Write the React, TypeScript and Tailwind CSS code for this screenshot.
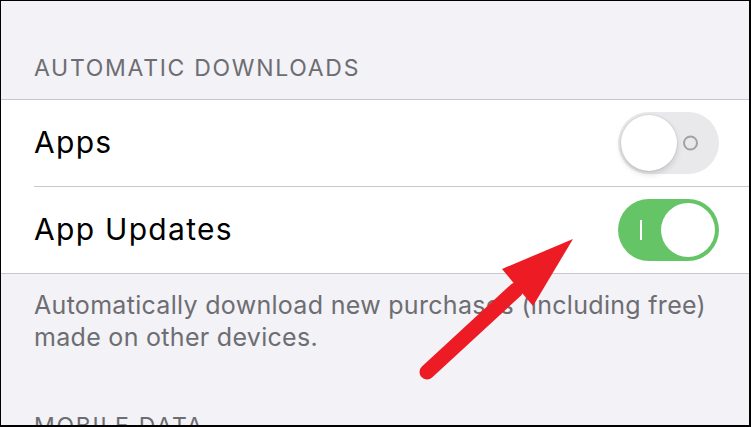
import React from "react";

const font = { fontFamily: "Inter, 'Noto Sans', sans-serif" };

function ToggleOff() {
  return (
    <div className="relative w-[101px] h-[62px] rounded-full bg-[#e9e9eb] flex items-center">
      <div className="absolute right-[21px] top-1/2 -translate-y-1/2 w-[15px] h-[15px] rounded-full border-2 border-[#a2a2a6]" />
      <div className="absolute left-[3px] top-[3px] w-[56px] h-[56px] rounded-full bg-white shadow-[0_3px_6px_rgba(0,0,0,0.15),0_0_0_1px_rgba(0,0,0,0.05)]" />
    </div>
  );
}

function ToggleOn() {
  return (
    <div className="relative w-[101px] h-[62px] rounded-full bg-[#65c466] flex items-center">
      <div className="absolute left-[22px] top-1/2 -translate-y-1/2 w-[2px] h-[20px] bg-white" />
      <div className="absolute right-[4px] top-[4px] w-[54px] h-[54px] rounded-full bg-white" />
    </div>
  );
}

export default function App() {
  return (
    <div
      className="relative w-[751px] h-[427px] overflow-hidden bg-[#f2f2f7] border-t border-l border-r-2 border-b-2 border-black"
      style={font}
    >
      <div className="h-[98px] flex items-end pl-[33px] pb-[19px]">
        <span className="text-[23px] leading-[23px] text-[#6d6d72] tracking-[1.7px]">AUTOMATIC DOWNLOADS</span>
      </div>
      <div className="bg-white border-t border-b border-[#c8c7cc]">
        <div className="h-[86px] flex items-center justify-between pl-[33px] pr-[30px]">
          <span className="text-[30px] leading-[42px] text-black tracking-[1.3px] -mt-[2px]">Apps</span>
          <ToggleOff />
        </div>
        <div className="ml-[33px] h-px bg-[#c8c7cc]" />
        <div className="h-[86px] flex items-center justify-between pl-[33px] pr-[30px]">
          <span className="text-[30px] leading-[42px] text-black tracking-[1.3px] -mt-[2px]">App Updates</span>
          <ToggleOn />
        </div>
      </div>
      <div className="pl-[33px] pt-[15px] pr-[10px]">
        <p className="text-[25px] leading-[32px] text-[#6d6d72] tracking-[0.3px] whitespace-nowrap">
          Automatically download new purchases (including free)
          <br />
          made on other devices.
        </p>
      </div>
      <div className="pl-[33px] pt-[62px]">
        <span className="block text-[23px] leading-[23px] text-[#6d6d72] tracking-[1.7px]">MOBILE DATA</span>
      </div>
      <svg className="absolute left-0 top-0" width="751" height="427" viewBox="0 0 751 427">
        <line x1="426" y1="371" x2="515" y2="289" stroke="#ed1c24" strokeWidth="15" strokeLinecap="round" />
        <polygon points="572,238 501,268 532,305" fill="#ed1c24" />
      </svg>
    </div>
  );
}
